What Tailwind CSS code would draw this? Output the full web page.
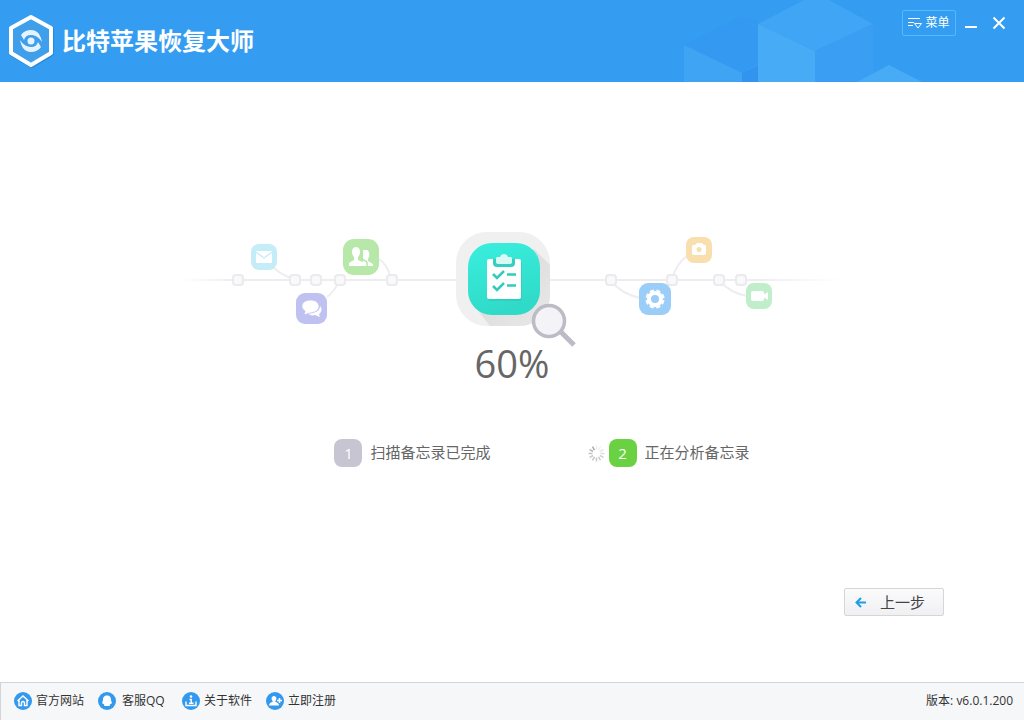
<!DOCTYPE html>
<html lang="zh-CN">
<head>
<meta charset="utf-8">
<meta name="viewport" content="width=device-width, initial-scale=1">
<title>比特苹果恢复大师</title>
<script src="https://cdn.jsdelivr.net/npm/@tailwindcss/browser@4"></script>
</head>
<body class="flex min-h-screen flex-col bg-white font-['Open_Sans','Noto_Sans_CJK_SC',sans-serif] text-[#444]">

<header class="relative flex h-[82px] shrink-0 items-start justify-between overflow-hidden bg-[#349df2]">
  <svg class="absolute top-0 right-0" width="354" height="82" viewBox="670 0 354 82" aria-hidden="true">
    <path d="M684 45 741 16 758 21V62L742 73Z" fill="#3499f1"/>
    <path d="M684 45 742 73V82H684Z" fill="#3fa4f4"/>
    <path d="M742 73 758 66V82H742Z" fill="#3294ef"/>
    <path d="M758 24 804 0H829L873 24 815 51Z" fill="#3fa5f4"/>
    <path d="M758 24 815 51V82H758Z" fill="#48abf6"/>
    <path d="M815 51 873 24V82H815Z" fill="#3a9ff3"/>
    <path d="M857 82 889 65 922 82Z" fill="#48abf6"/>
  </svg>
  <div class="relative flex h-full items-center gap-2 pl-1">
    <svg width="50" height="60" viewBox="0 0 50 60" aria-hidden="true">
      <path d="M28 7 48 18V43L28 55 7 43V18Z" fill="none" stroke="#1b6fbd" stroke-opacity=".45" stroke-width="4" stroke-linejoin="round"/>
      <path d="M27 6 47 17V42L27 54 7 42V17Z" fill="#3f9fea" stroke="#fff" stroke-width="4" stroke-linejoin="round"/>
      <circle cx="27" cy="30" r="3.500" fill="#e4f3ff"/>
      <path d="M17 24C21 18 31 17 35 23Q37 26 38 31C35 27 33 25 30 24.500 25 23 21 25 20 29 19 27 18 26 17 24Z" fill="#e4f3ff"/>
      <path d="M37 36C33 42 23 43 19 37Q17 34 16 29C19 33 21 35 24 35.500 29 37 33 35 34 31 35 33 36 34 37 36Z" fill="#e4f3ff"/>
    </svg>
    <h1 class="text-2xl leading-8 font-bold text-white">比特苹果恢复大师</h1>
  </div>
  <div class="relative flex items-center gap-2 pt-[10px] pr-[18px] text-white">
    <button class="flex h-[26px] w-[54px] items-center justify-center gap-[2px] rounded-xs border border-[#50bdfa] text-xs">
      <svg width="15" height="14" viewBox="0 0 15 14" fill="none" stroke="currentColor" aria-hidden="true"><path d="M0 2.500H12M0 6.500H6M0 9.500H5M6.500 7.500H13.500L10 12Z"/></svg>
      菜单
    </button>
    <button aria-label="最小化" class="flex h-6 w-[14px] items-center"><svg width="14" height="16" viewBox="0 0 14 16" aria-hidden="true"><path d="M1 12H13" stroke="#fff" stroke-width="2"/></svg></button>
    <button aria-label="关闭" class="ml-[6px] flex h-6 w-[14px] items-center"><svg width="14" height="14" viewBox="0 0 14 14" aria-hidden="true"><path d="M1.500 1.500 12.500 12.500M12.500 1.500 1.500 12.500" stroke="#fff" stroke-width="2"/></svg></button>
  </div>
</header>

<main class="flex flex-1 flex-col items-center pt-[143px]">
  <svg width="660" height="123" viewBox="182 225 660 123" class="shrink-0" aria-hidden="true">
    <defs>
      <linearGradient id="rail" gradientUnits="userSpaceOnUse" x1="182" x2="842" y1="0" y2="0"><stop offset="0" stop-color="#fff"/><stop offset=".08" stop-color="#ededf0"/><stop offset=".87" stop-color="#ededf0"/><stop offset="1" stop-color="#fff"/></linearGradient>
      <linearGradient id="teal" x1="0" y1="0" x2=".3" y2="1"><stop offset="0" stop-color="#39efde"/><stop offset="1" stop-color="#30dac8"/></linearGradient>
      <linearGradient id="shade" x1="0" y1="0" x2="1" y2="1"><stop offset=".3" stop-color="#dcdcdc"/><stop offset="1" stop-color="#ececec"/></linearGradient>
      <clipPath id="tile"><rect x="456" y="232" width="94" height="94" rx="31"/></clipPath>
    </defs>
    <rect x="182" y="279" width="660" height="2" fill="url(#rail)"/>
    <g fill="none" stroke="#ededf2" stroke-width="2">
      <path d="M273 267Q281 275 294 279M327 297Q335 291 339 281M379 259Q388 265 391 279M612 282Q622 294 640 298M672 279Q676 264 687 256M720 281Q730 293 747 296"/>
    </g>
    <g fill="#f9f9fb" stroke="#ebebee" stroke-width="2">
      <rect x="233" y="275" width="10" height="10" rx="3"/><rect x="290" y="275" width="10" height="10" rx="3"/><rect x="311" y="275" width="10" height="10" rx="3"/><rect x="335" y="275" width="10" height="10" rx="3"/><rect x="387" y="275" width="10" height="10" rx="3"/>
      <rect x="606" y="275" width="10" height="10" rx="3"/><rect x="667" y="275" width="10" height="10" rx="3"/><rect x="714" y="275" width="10" height="10" rx="3"/><rect x="736" y="275" width="10" height="10" rx="3"/>
    </g>
    <!-- mail -->
    <rect x="251" y="244" width="26" height="26" rx="8" fill="#c4edf7"/>
    <rect x="256" y="251" width="16" height="12" fill="#fff"/><path d="M256 252 264 258 272 252" fill="none" stroke="#c4edf7" stroke-width="1.300"/>
    <!-- messages -->
    <rect x="296" y="293" width="31" height="31" rx="9" fill="#bfc2f0"/>
    <path d="M320 306C323 309 321 313 319 314L320 317 315 315C312 316 309 315 308 313 315 313 320 311 320 306Z" fill="#fff"/>
    <path d="M310.500 300C316 300 319 303 319 306.500S315 313 310 313L304 315 305 311C299 307 302 300 310.500 300Z" fill="#fff" stroke="#bfc2f0" stroke-width=".8"/>
    <!-- contacts -->
    <rect x="343" y="239" width="36" height="36" rx="11" fill="#b7e8a9"/>
    <path d="M366 250C370 250 370 256 368 259V261L373 264V266H363V250Z" fill="#fff"/>
    <path d="M356 247C361 247 361 254 358 257V260L365 263V266H349V263L354 260V257C351 254 351 247 356 247Z" fill="#fff"/>
    <path d="M362 259 367 262V266" fill="none" stroke="#b7e8a9" stroke-width="1.500"/>
    <!-- settings -->
    <rect x="639" y="283" width="32" height="32" rx="9" fill="#9acdf7"/>
    <circle cx="655" cy="299" r="8" fill="#fff"/><circle cx="655" cy="299" r="8.600" fill="none" stroke="#fff" stroke-width="2" stroke-dasharray="4.200 2.554" transform="rotate(8 655 299)"/><circle cx="655" cy="299" r="4" fill="#9acdf7"/>
    <!-- camera -->
    <rect x="686" y="237" width="26" height="26" rx="8" fill="#f9dfae"/>
    <path d="M693 245H695L697 243H702L704 245H705Q706 245 706 247V253Q706 255 704 255H694Q692 255 692 253V247Q692 245 693 245Z" fill="#fff"/><circle cx="699" cy="249.500" r="2.500" fill="#f9dfae"/>
    <!-- video -->
    <rect x="746" y="283" width="26" height="26" rx="8" fill="#c0eecb"/>
    <rect x="751" y="291" width="13" height="10" rx="2" fill="#fff"/><path d="M763 295 768 292V300L763 297Z" fill="#fff"/>
    <!-- notes tile -->
    <rect x="456" y="232" width="94" height="94" rx="31" fill="#f0f0f0"/>
    <path d="M534 249 560 275V340H501L472 303Z" fill="url(#shade)" clip-path="url(#tile)"/>
    <rect x="468" y="243" width="72" height="72" rx="24" fill="url(#teal)"/>
    <rect x="488" y="261" width="34" height="40" rx="2" fill="#24baa9" opacity=".35"/>
    <rect x="487" y="259" width="34" height="40" rx="2" fill="#fff"/>
    <path d="M493 259H515V263Q515 267 511 267H497Q493 267 493 263Z" fill="#34cfbe"/>
    <path d="M497 257H500Q501 254 504 254T508 257H511Q512 257 512 259V262Q512 264 510 264H498Q496 264 496 262V259Q496 257 497 257Z" fill="#d9f9f5"/>
    <path d="M493 274 497 278 504 271M493 286 497 290 504 283M507 274.500H516M507 285.500H516" fill="none" stroke="#2fcdbb" stroke-width="2.500"/>
    <!-- magnifier -->
    <path d="M560 331 574 345" stroke="#bcbbc6" stroke-width="5"/>
    <circle cx="549" cy="321" r="15.500" fill="#f3f3f8" stroke="#bcbbc6" stroke-width="3.500"/>
  </svg>

  <p class="font-['Open_Sans','Noto_Sans',sans-serif] text-[38px] leading-[30px] text-[#666]" role="status">60%</p>

  <ol class="mt-[61px] flex items-center justify-center gap-[97px] pl-[60px] text-[15px] leading-7 text-[#666]">
    <li class="flex items-center gap-2"><span class="flex size-7 items-center justify-center rounded-lg bg-[#c6c5d1] text-white">1</span><span class="-mt-0.5">扫描备忘录已完成</span></li>
    <li class="flex items-center gap-2">
      <span class="flex items-center gap-1">
        <svg width="17" height="17" viewBox="-8.500 -8.500 17 17" stroke-width="1.500" aria-hidden="true">
          <path d="M0-4V-8" stroke="#eee"/><path d="M0-4V-8" stroke="#f0f0f0" transform="rotate(30)"/><path d="M0-4V-8" stroke="#e8e8e8" transform="rotate(60)"/><path d="M0-4V-8" stroke="#ddd" transform="rotate(90)"/><path d="M0-4V-8" stroke="#d4d4d4" transform="rotate(120)"/><path d="M0-4V-8" stroke="#ccc" transform="rotate(150)"/><path d="M0-4V-8" stroke="#c8c8c8" transform="rotate(180)"/><path d="M0-4V-8" stroke="#c4c4c4" transform="rotate(210)"/><path d="M0-4V-8" stroke="#ccc" transform="rotate(240)"/><path d="M0-4V-8" stroke="#c4c4c4" transform="rotate(270)"/><path d="M0-4V-8" stroke="#bbb" transform="rotate(300)"/><path d="M0-4V-8" stroke="#aaa" transform="rotate(330)"/>
        </svg>
        <span class="flex size-7 items-center justify-center rounded-lg bg-[#6ad142] text-white">2</span>
      </span>
      <span class="-mt-0.5">正在分析备忘录</span>
    </li>
  </ol>

  <button class="mt-auto mr-20 mb-[66px] flex h-7 w-[100px] items-center gap-[14px] self-end rounded-xs border border-[#d6d6d9] bg-linear-to-b from-[#fbfbfc] to-[#f0f0f2] pl-[10px] text-[15px] text-[#444]">
    <svg width="11" height="12" viewBox="0 0 11 12" fill="none" stroke="#1b9fe6" stroke-width="2" aria-hidden="true"><path d="M11 6.500H2M6 2 1.500 6.500 6 11"/></svg>
    上一步
  </button>
</main>

<footer class="flex h-[38px] shrink-0 items-center justify-between border-t border-l border-[#d3d4d6] bg-[#f5f7f9] pr-[11px] pb-[2px] pl-[13px] text-xs text-[#333]">
  <nav class="grid grid-cols-[repeat(4,84px)] items-center">
    <a href="#" class="flex items-center gap-1">
      <svg width="18" height="18" viewBox="0 0 18 18" aria-hidden="true"><circle cx="9" cy="9" r="9" fill="#3399ee"/><path d="M3.500 9 9 4 14.500 9M5 8V13.500H7.500V10.500Q9 8.500 10.500 10.500V13.500H13V8" fill="none" stroke="#fff" stroke-width="1.400"/></svg>
      官方网站</a>
    <a href="#" class="flex items-center gap-[6px]">
      <svg width="18" height="18" viewBox="0 0 18 18" aria-hidden="true"><circle cx="9" cy="9" r="9" fill="#3399ee"/><path d="M9 3.500C12.500 3.500 13 6 13 8L14 11.500 13 11.500 11.500 13 12 14H6L6.500 13 5 11.500 4 11.500 5 8C5 6 5.500 3.500 9 3.500Z" fill="#fff"/></svg>
      客服QQ</a>
    <a href="#" class="flex items-center gap-1">
      <svg width="18" height="18" viewBox="0 0 18 18" aria-hidden="true"><circle cx="9" cy="9" r="9" fill="#3399ee"/><circle cx="9" cy="4.500" r="1.300" fill="#fff"/><path d="M7.500 7.500H9.200V11.500M7 11.300H11.500M4 9.500V13.500H14V9.500" fill="none" stroke="#fff" stroke-width="1.400"/></svg>
      关于软件</a>
    <a href="#" class="flex items-center gap-1">
      <svg width="18" height="18" viewBox="0 0 18 18" aria-hidden="true"><circle cx="9" cy="9" r="9" fill="#3399ee"/><path d="M8 4C11 4 11 8 9 9.500 11 10.500 13 11 13 13.500H3C3 11 5 10.500 7 9.500 5 8 5 4 8 4Z" fill="#fff"/><path d="M11 8.500H16M13.500 6V11" stroke="#fff" stroke-width="1.500"/></svg>
      立即注册</a>
  </nav>
  <span>版本: v6.0.1.200</span>
</footer>
</body>
</html>
